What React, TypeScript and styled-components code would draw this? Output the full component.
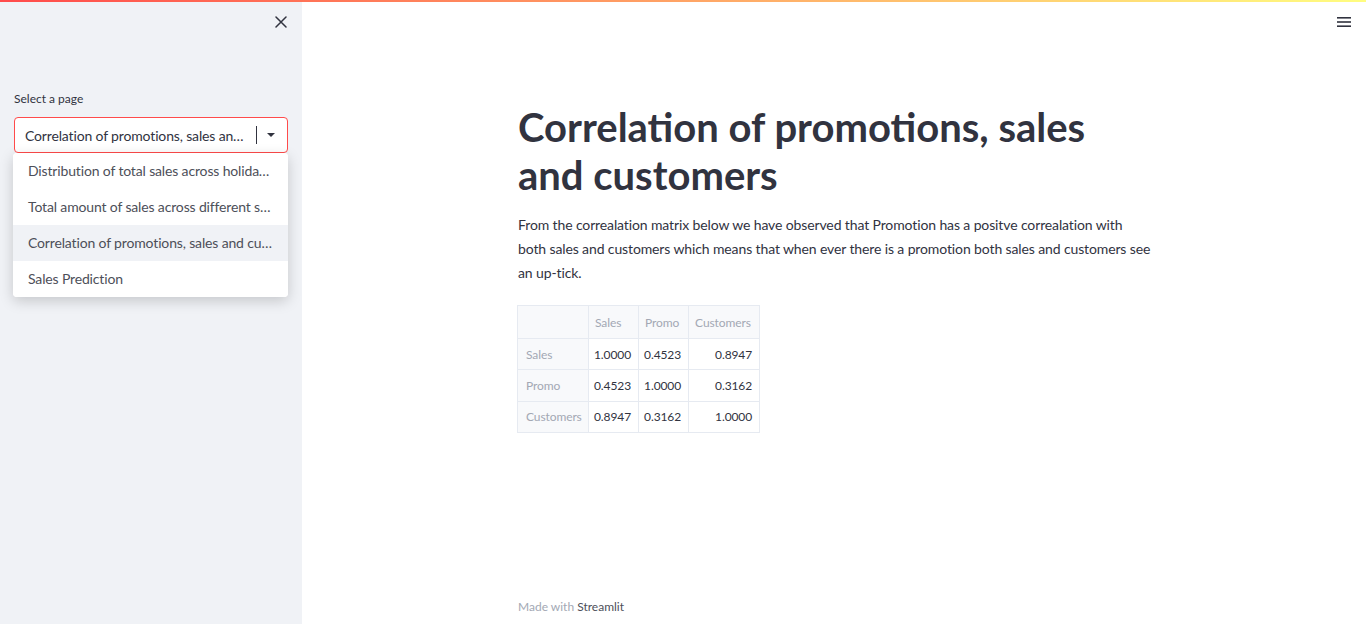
import React from "react";
import styled, { createGlobalStyle } from "styled-components";

const GlobalStyle = createGlobalStyle`
  * { box-sizing: border-box; }
  body {
    margin: 0;
    font-family: "Lato", "Noto Sans", sans-serif;
    color: #31333f;
    background: #ffffff;
  }
`;

const pages = [
  "Distribution of total sales across holidays and other days",
  "Total amount of sales across different store types",
  "Correlation of promotions, sales and customers",
  "Sales Prediction",
];

const columns = [
  { label: "", width: 71 },
  { label: "Sales", width: 48 },
  { label: "Promo", width: 48 },
  { label: "Customers", width: 71 },
];

const matrix = [
  { name: "Sales", values: ["1.0000", "0.4523", "0.8947"] },
  { name: "Promo", values: ["0.4523", "1.0000", "0.3162"] },
  { name: "Customers", values: ["0.8947", "0.3162", "1.0000"] },
];

function CloseIcon() {
  return (
    <svg width="12" height="12" viewBox="0 0 12 12">
      <path d="M1 1 L11 11 M11 1 L1 11" stroke="#31333f" strokeWidth="1.5" strokeLinecap="round" />
    </svg>
  );
}

function MenuIcon() {
  return (
    <svg width="16" height="12" viewBox="0 0 16 12">
      <rect x="1" y="1" width="14" height="1.6" fill="#31333f" />
      <rect x="1" y="5.2" width="14" height="1.6" fill="#31333f" />
      <rect x="1" y="9.4" width="14" height="1.6" fill="#31333f" />
    </svg>
  );
}

function App() {
  return (
    <>
      <GlobalStyle />
      <TopBar />
      <Page>
        <Sidebar>
          <SidebarHeader>
            <IconButton>
              <CloseIcon />
            </IconButton>
          </SidebarHeader>
          <Label>Select a page</Label>
          <SelectWrap>
            <SelectBox>
              <SelectValue>{pages[2]}</SelectValue>
              <Divider />
              <Caret />
            </SelectBox>
            <Menu>
              {pages.map((p, i) => (
                <MenuItem key={p} active={i === 2}>
                  {p}
                </MenuItem>
              ))}
            </Menu>
          </SelectWrap>
        </Sidebar>
        <Main>
          <MainHeader>
            <IconButton>
              <MenuIcon />
            </IconButton>
          </MainHeader>
          <Content>
            <Title>Correlation of promotions, sales and customers</Title>
            <Paragraph>
              From the correalation matrix below we have observed that Promotion has a positve correalation with
              <br />
              both sales and customers which means that when ever there is a promotion both sales and customers see
              <br />
              an up-tick.
            </Paragraph>
            <Table>
              <thead>
                <tr>
                  {columns.map((c, i) => (
                    <HeadCell key={i} width={c.width}>
                      {c.label}
                    </HeadCell>
                  ))}
                </tr>
              </thead>
              <tbody>
                {matrix.map((row) => (
                  <tr key={row.name}>
                    <IndexCell>{row.name}</IndexCell>
                    {row.values.map((v, i) => (
                      <ValueCell key={i}>{v}</ValueCell>
                    ))}
                  </tr>
                ))}
              </tbody>
            </Table>
          </Content>
          <Footer>
            Made with <strong>Streamlit</strong>
          </Footer>
        </Main>
      </Page>
    </>
  );
}

export default App;

const TopBar = styled.div`
  position: fixed;
  top: 0;
  left: 0;
  right: 0;
  height: 2px;
  z-index: 10;
  background: linear-gradient(90deg, #ff4b4b, #fffd80);
`;

const Page = styled.div`
  display: flex;
  height: 100vh;
  overflow: hidden;
`;

const Sidebar = styled.aside`
  width: 302px;
  flex-shrink: 0;
  background: #f0f2f6;
  padding: 8px 14px 0 14px;
  display: flex;
  flex-direction: column;
`;

const SidebarHeader = styled.div`
  display: flex;
  justify-content: flex-end;
  height: 28px;
  margin-right: -7px;
  margin-bottom: 55px;
`;

const IconButton = styled.div`
  width: 28px;
  height: 28px;
  display: flex;
  align-items: center;
  justify-content: center;
`;

const Label = styled.div`
  font-size: 12px;
  line-height: 16px;
  margin-bottom: 10px;
  color: #31333f;
`;

const SelectWrap = styled.div`
  position: relative;
`;

const SelectBox = styled.div`
  height: 36px;
  border: 1px solid #ff4b4b;
  border-radius: 4px;
  background: #ffffff;
  display: flex;
  align-items: center;
  padding-left: 10px;
  padding-right: 10px;
`;

const SelectValue = styled.div`
  flex: 1;
  font-size: 14px;
  letter-spacing: -0.15px;
  white-space: nowrap;
  overflow: hidden;
  text-overflow: ellipsis;
  padding-right: 8px;
`;

const Divider = styled.div`
  width: 1px;
  height: 18px;
  background: #31333f;
  margin-right: 10px;
`;

const Caret = styled.div`
  width: 0;
  height: 0;
  border-left: 4px solid transparent;
  border-right: 4px solid transparent;
  border-top: 4px solid #31333f;
  margin-right: 2px;
`;

const Menu = styled.ul`
  position: absolute;
  top: 36px;
  left: -1px;
  right: 0;
  margin: 0;
  padding: 0;
  list-style: none;
  background: #ffffff;
  border-radius: 4px;
  box-shadow: 0 4px 14px rgba(0, 0, 0, 0.18);
  overflow: hidden;
`;

const MenuItem = styled.li<{ active?: boolean }>`
  display: block;
  height: 36px;
  line-height: 36px;
  padding: 0 14px 0 15px;
  font-size: 14px;
  letter-spacing: -0.15px;
  color: #4d4f59;
  background: ${(p) => (p.active ? "#f0f2f6" : "#ffffff")};
  white-space: nowrap;
  overflow: hidden;
  text-overflow: ellipsis;
`;

const Main = styled.main`
  flex: 1;
  display: flex;
  flex-direction: column;
  align-items: center;
`;

const MainHeader = styled.div`
  align-self: stretch;
  display: flex;
  justify-content: flex-end;
  padding: 8px 8px 0 0;
  height: 36px;
`;

const Content = styled.div`
  width: 632px;
  padding-top: 67px;
`;

const Title = styled.h1`
  margin: 0 0 14px 0;
  font-size: 40px;
  line-height: 48px;
  font-weight: 700;
  color: #31333f;
`;

const Paragraph = styled.p`
  margin: 0 0 20px 0;
  font-size: 14px;
  line-height: 24px;
  letter-spacing: -0.12px;
  white-space: nowrap;
`;

const Table = styled.table`
  border-collapse: collapse;
  font-size: 12px;
  letter-spacing: -0.1px;
  border: 1px solid #e6eaf1;
  margin-left: -1px;
`;

const HeadCell = styled.th<{ width: number }>`
  width: ${(p) => p.width}px;
  height: 33px;
  padding: 0 6px;
  background: #f8f9fb;
  color: #a3a8b4;
  font-weight: 400;
  text-align: left;
  border: 1px solid #e6eaf1;
  border-bottom: none;
`;

const IndexCell = styled.td`
  height: 31.3px;
  padding: 0 5px 0 8px;
  background: #f8f9fb;
  color: #a3a8b4;
  border: 1px solid #e6eaf1;
`;

const ValueCell = styled.td`
  height: 31.3px;
  padding: 0 7px 0 5px;
  text-align: right;
  color: #31333f;
  border: 1px solid #e6eaf1;
  background: #ffffff;
`;

const Footer = styled.div`
  margin-top: auto;
  width: 632px;
  padding-bottom: 10px;
  font-size: 12px;
  color: #a3a8b4;

  strong {
    font-weight: 400;
    color: #4d4f59;
  }
`;
